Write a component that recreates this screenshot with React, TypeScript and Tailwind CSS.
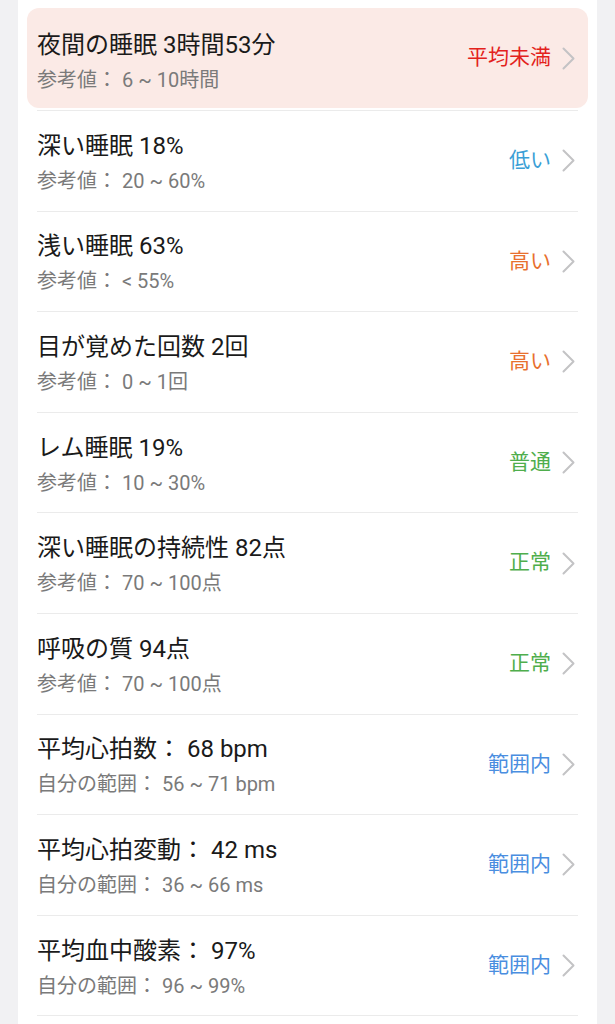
const FONT = 'Roboto, "Noto Sans CJK JP", sans-serif';

type Tone = 'red' | 'sky' | 'orange' | 'green' | 'blue';

interface Item {
    title: string;
    sub: string;
    status: string;
    tone: Tone;
    highlight?: boolean;
}

const items: Item[] = [
    { title: '夜間の睡眠 3時間53分', sub: '参考値： 6 ~ 10時間', status: '平均未満', tone: 'red', highlight: true },
    { title: '深い睡眠 18%', sub: '参考値： 20 ~ 60%', status: '低い', tone: 'sky' },
    { title: '浅い睡眠 63%', sub: '参考値： < 55%', status: '高い', tone: 'orange' },
    { title: '目が覚めた回数 2回', sub: '参考値： 0 ~ 1回', status: '高い', tone: 'orange' },
    { title: 'レム睡眠 19%', sub: '参考値： 10 ~ 30%', status: '普通', tone: 'green' },
    { title: '深い睡眠の持続性 82点', sub: '参考値： 70 ~ 100点', status: '正常', tone: 'green' },
    { title: '呼吸の質 94点', sub: '参考値： 70 ~ 100点', status: '正常', tone: 'green' },
    { title: '平均心拍数： 68 bpm', sub: '自分の範囲： 56 ~ 71 bpm', status: '範囲内', tone: 'blue' },
    { title: '平均心拍変動： 42 ms', sub: '自分の範囲： 36 ~ 66 ms', status: '範囲内', tone: 'blue' },
    { title: '平均血中酸素： 97%', sub: '自分の範囲： 96 ~ 99%', status: '範囲内', tone: 'blue' },
];

const toneClass: Record<Tone, string> = {
    red: 'text-[#e3221c]',
    sky: 'text-[#3b9fd6]',
    orange: 'text-[#e8702e]',
    green: 'text-[#4fae4c]',
    blue: 'text-[#4a8ee0]',
};

function Chevron() {
    return (
        <svg width="13" height="23" viewBox="0 0 13 23" fill="none" className="ml-[11px] shrink-0">
            <path d="M1.5 1.5 L11.5 11.5 L1.5 21.5" stroke="#c3c3c5" strokeWidth="2" strokeLinecap="round" strokeLinejoin="round" />
        </svg>
    );
}

function Row({ item }: { item: Item }) {
    const body = (
        <div className="flex h-full items-center pr-[3px]">
            <div className={`min-w-0 flex-1 ${item.highlight ? 'pt-[6px]' : 'pt-[3px]'}`}>
                <div className="text-[24px] leading-[30px] text-[#1a1a1a]">{item.title}</div>
                <div className="mt-[7px] text-[20px] leading-[26px] text-[#7a7a7a]">{item.sub}</div>
            </div>
            <span className={`text-[21px] ${toneClass[item.tone]}`}>{item.status}</span>
            <Chevron />
        </div>
    );

    if (item.highlight) {
        return (
            <div className="border-b border-[#ebebeb] pb-[2px] pt-[8px]">
                <div className="-mx-[10px] h-[100px] rounded-[12px] bg-[#fbeae6] px-[10px]">{body}</div>
            </div>
        );
    }

    return <div className="h-[100.6px] border-b border-[#ebebeb]">{body}</div>;
}

export default function App() {
    return (
        <div className="min-h-screen bg-[#f1f1f3] px-[18px]" style={{ fontFamily: FONT }}>
            <div className="min-h-screen bg-white px-[19px]">
                {items.map((item, i) => (
                    <Row key={i} item={item} />
                ))}
            </div>
        </div>
    );
}
